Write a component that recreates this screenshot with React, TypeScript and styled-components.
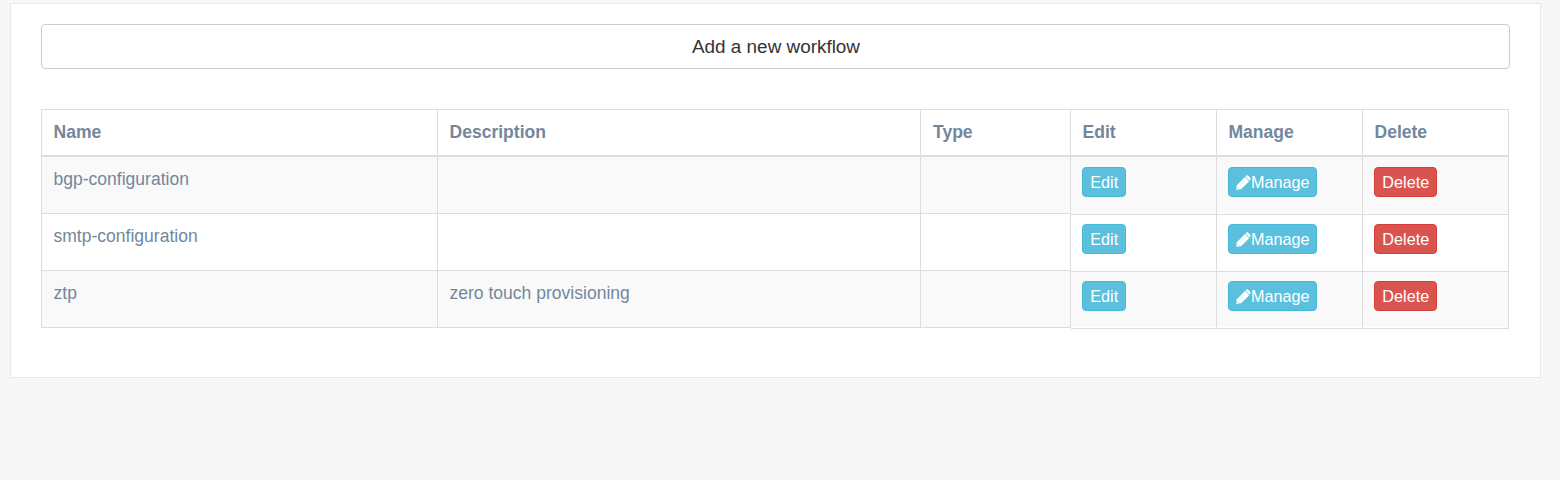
import React from "react";
import styled, { createGlobalStyle } from "styled-components";

const GlobalStyle = createGlobalStyle`
  * { box-sizing: border-box; }
  body {
    margin: 0;
    background: #f7f7f7;
    color: #73879c;
    font-family: "Liberation Sans", Arial, sans-serif;
    font-size: 17.55px;
  }
`;

const Page = styled.main`
  height: 480px;
  padding: 3px 19px 0 10px;
`;

const Panel = styled.section`
  height: 375px;
  padding: 20px 30px;
  background: #fff;
  border: 1px solid #e6e9ed;
`;

const AddButton = styled.button`
  display: block;
  width: 100%;
  height: 45px;
  padding: 0 0 0 1px;
  border: 1px solid #ccc;
  border-radius: 4px;
  background: #fff;
  color: #333;
  font: 18.9px/43px "Liberation Sans", Arial, sans-serif;
`;

const Table = styled.div`
  display: flex;
  align-items: flex-start;
  margin: 40px 1px 0 0;
`;

const Column = styled.div<{ $width: number }>`
  display: flex;
  flex-direction: column;
  width: ${(p) => p.$width}px;
  border-right: 1px solid #ddd;
  &:first-child { border-left: 1px solid #ddd; }
`;

const HeaderCell = styled.div<{ $indent?: number }>`
  height: 48px;
  padding: 0 11px 0 ${(p) => p.$indent ?? 11.5}px;
  border-top: 1px solid #ddd;
  border-bottom: 2px solid #ddd;
  font-weight: bold;
  line-height: 44px;
`;

const TextCell = styled.div`
  height: 57px;
  padding: 10px 11px 10px 11.5px;
  border-bottom: 1px solid #ddd;
  line-height: 25px;
  &:nth-child(even) { background: #f9f9f9; }
`;

const ActionCell = styled.div`
  height: 57px;
  padding: 9px 11px;
  border-bottom: 1px solid #ddd;
  &:nth-child(2) { height: 58px; padding-top: 10px; }
  &:nth-child(even) {
    background: #f9f9f9;
    box-shadow: inset 0 -1px #fff;
  }
`;

const ActionButton = styled.button<{ $danger?: boolean; $width: number }>`
  display: flex;
  align-items: center;
  justify-content: center;
  width: ${(p) => p.$width}px;
  height: 30px;
  padding: 0 0 0 0.5px;
  border: 1px solid ${(p) => (p.$danger ? "#d43f3a" : "#46b8da")};
  border-radius: 4px;
  background: ${(p) => (p.$danger ? "#d9534f" : "#5bc0de")};
  color: #fff;
  font: 16.2px/28px "Liberation Sans", Arial, sans-serif;
`;

const PencilIcon = () => (
  <svg width="15" height="15" viewBox="0 0 15 15" fill="currentColor" aria-hidden="true">
    <path d="M9 2 13.2 6.2 5.4 14 .4 15 .6 10.4z" />
    <path d="M9.5 1.5 10.4.6Q11.2-.2 12 .6L14.3 2.9Q15 3.7 14.3 4.5L13.7 5.7z" />
    <path d="M1.5 12.3 3.1 13.9" stroke="#5bc0de" strokeWidth=".6" />
    <path d="M3.9 10.3 9.3 4.9" stroke="#5bc0de" strokeWidth=".4" opacity=".5" />
  </svg>
);

const workflows = [
  { name: "bgp-configuration", description: "", type: "" },
  { name: "smtp-configuration", description: "", type: "" },
  { name: "ztp", description: "zero touch provisioning", type: "" },
];

const textColumns = [
  { title: "Name", field: "name", width: 397, indent: 11.5 },
  { title: "Description", field: "description", width: 483, indent: 11.5 },
  { title: "Type", field: "type", width: 150, indent: 12 },
] as const;

const actionColumns = [
  { title: "Edit", buttonWidth: 44 },
  { title: "Manage", buttonWidth: 89, pencil: true },
  { title: "Delete", buttonWidth: 63, danger: true },
];

export default function App() {
  return (
    <Page>
      <GlobalStyle />
      <Panel>
        <AddButton>Add a new workflow</AddButton>
        <Table>
          {textColumns.map((column) => (
            <Column key={column.title} $width={column.width}>
              <HeaderCell $indent={column.indent}>{column.title}</HeaderCell>
              {workflows.map((workflow) => (
                <TextCell key={workflow.name}>{workflow[column.field]}</TextCell>
              ))}
            </Column>
          ))}
          {actionColumns.map((column) => (
            <Column key={column.title} $width={146}>
              <HeaderCell>{column.title}</HeaderCell>
              {workflows.map((workflow) => (
                <ActionCell key={workflow.name}>
                  <ActionButton $width={column.buttonWidth} $danger={column.danger}>
                    {column.pencil && <PencilIcon />}
                    {column.title}
                  </ActionButton>
                </ActionCell>
              ))}
            </Column>
          ))}
        </Table>
      </Panel>
    </Page>
  );
}
